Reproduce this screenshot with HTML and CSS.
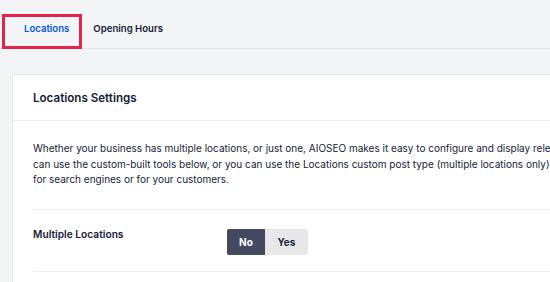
FILE: index.html
```html
<html>
<head>
<meta name="viewport" content="width=device-width,initial-scale=1.0">
<title>Local SEO</title>
<link rel="stylesheet" href="styles.css">
</head>
<body>
<div class="tabs">
<div class="tab active">Locations</div>
<div class="tab">Opening Hours</div>
</div>
<div class="mark"></div>
<div class="card">
<div class="card-head">Locations Settings</div>
<div class="card-body">
<p class="desc">Whether your business has multiple locations, or just one, AIOSEO makes it easy to configure and display relevant information to your visitors. You<br>can use the custom-built tools below, or you can use the Locations custom post type (multiple locations only) to generate relevant pages<br>for search engines or for your customers.</p>
<div class="row">
<div class="label">Multiple Locations</div>
<div class="toggle">
<button class="on">No</button>
<button>Yes</button>
</div>
</div>
</div>
</div>
</body>
</html>
```
FILE: styles.css
```css
body
{
margin:0;
background:#f3f4f6;
font-family:Inter,"Liberation Sans",sans-serif;
color:#141b38;
overflow:hidden;
}
.tabs
{
display:flex;
padding-left:12px;
height:48px;
border-bottom:1px solid #e1e3e8;
}
.tab
{
padding:0 12px;
font-size:9.6px;
font-weight:600;
line-height:14px;
padding-top:22px;
box-sizing:border-box;
height:48px;
}
.tab.active
{
color:#005ae0;
border-bottom:2px solid #005ae0;
}
.mark
{
position:absolute;
left:2px;
top:14px;
width:74px;
height:29px;
border:3px solid #e4244a;
}
.card
{
margin:25px 0 0 12px;
width:620px;
background:#fff;
border:1px solid #e8e8eb;
}
.card-head
{
height:45px;
line-height:46px;
padding:0 20px;
font-size:11.6px;
font-weight:600;
border-bottom:1px solid #ececef;
}
.card-body
{
padding:20px 20px 40px;
}
.desc
{
margin:0 0 21px;
font-size:10px;
line-height:15.5px;
white-space:nowrap;
}
.row
{
display:flex;
align-items:flex-start;
padding:17px 0 16px;
border-top:1px solid #ececef;
border-bottom:1px solid #ececef;
}
.label
{
width:194px;
font-size:10.2px;
font-weight:600;
line-height:15px;
}
.toggle
{
display:flex;
margin-top:2px;
}
.toggle button
{
border:0;
height:26px;
width:43px;
font-family:Inter,"Liberation Sans",sans-serif;
font-size:10px;
font-weight:700;
color:#141b38;
background:#e8e8eb;
border-radius:0 2px 2px 0;
}
.toggle button.on
{
width:38px;
background:#434960;
color:#fff;
border-radius:2px 0 0 2px;
}
```
